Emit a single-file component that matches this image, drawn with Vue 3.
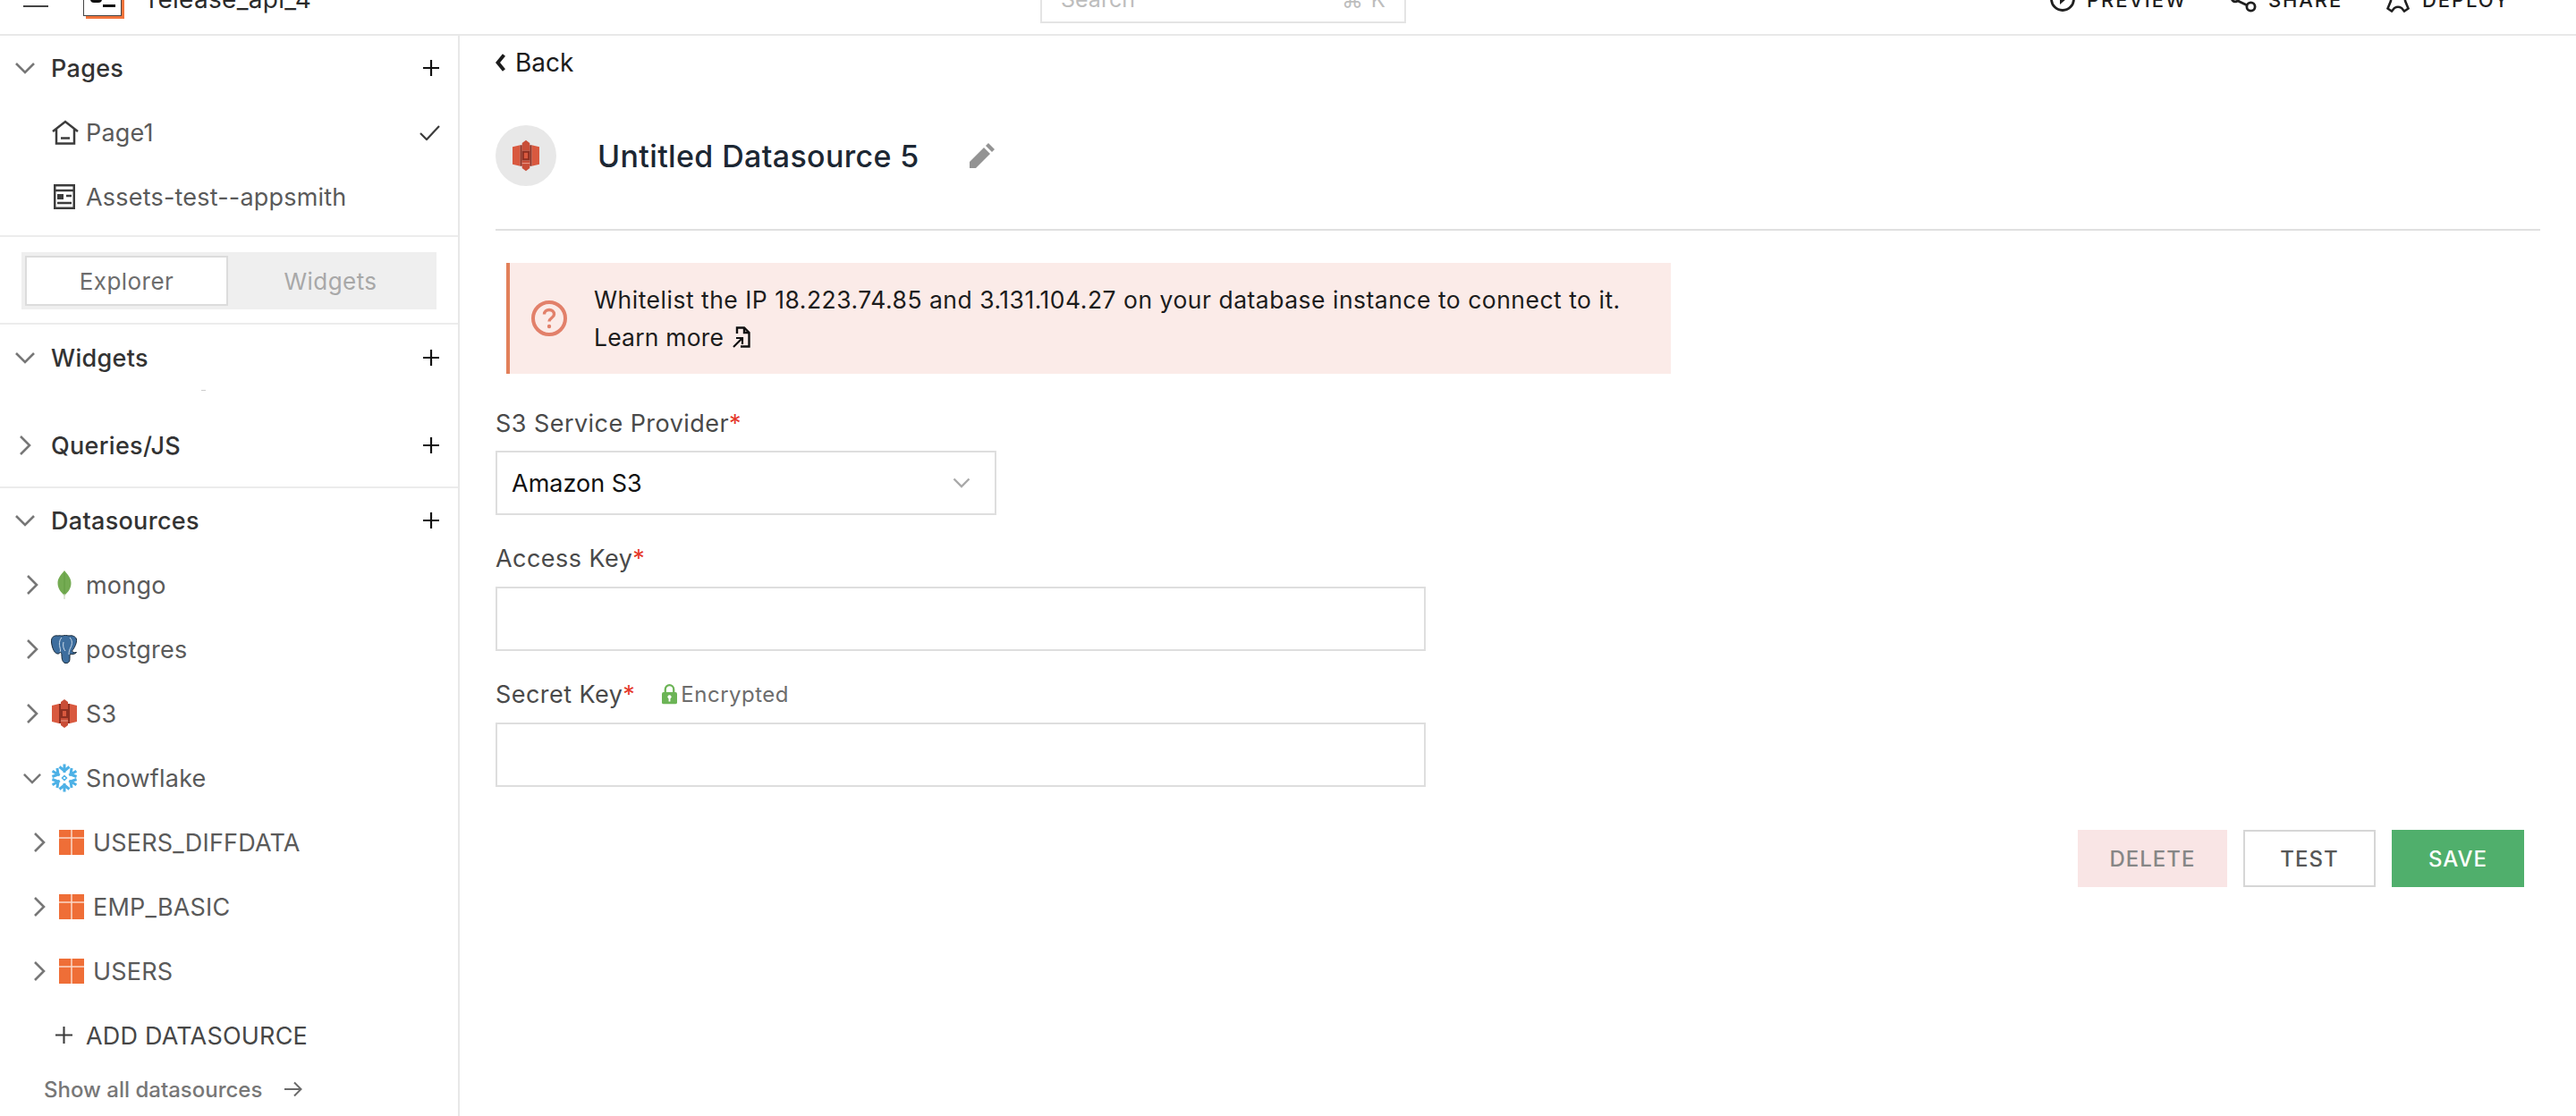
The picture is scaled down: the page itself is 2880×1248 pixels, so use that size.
<script setup>
const pages = [
  { name: 'Page1', icon: 'home', check: true },
  { name: 'Assets-test--appsmith', icon: 'doc', check: false }
]
const sources = [
  { name: 'mongo', icon: 'mongo' },
  { name: 'postgres', icon: 'pg' },
  { name: 'S3', icon: 's3' }
]
const tables = ['USERS_DIFFDATA', 'EMP_BASIC', 'USERS']
</script>

<template>
  <div class="app">
    <header class="top">
      <div class="top-left">
        <div class="burger"><i></i><i></i><i></i></div>
        <div class="logo"><span class="logo-box"><b></b><em></em></span></div>
        <span class="app-name">release_api_4</span>
        <svg class="caret" width="10" height="7" viewBox="0 0 12 8"><path d="M0 0h12L6 7z" fill="#222"/></svg>
      </div>
      <div class="search">
        <span class="s-ph">Search</span>
        <span class="s-key">⌘ K</span>
      </div>
      <div class="top-right">
        <div class="act prev">
          <svg width="28" height="28" viewBox="0 0 28 28" fill="none" stroke="#1f1f1f" stroke-width="2.800"><circle cx="14" cy="14" r="12.500"/><path d="M11 8l7 6-7 6z" fill="#1f1f1f" stroke="none"/></svg>
          <span>PREVIEW</span>
        </div>
        <div class="act share">
          <svg width="29" height="30" viewBox="0 0 29 30" fill="none" stroke="#1f1f1f" stroke-width="2.800"><circle cx="5" cy="14" r="3.800"/><circle cx="23" cy="5" r="3.800"/><circle cx="22.500" cy="23.500" r="4.600"/><path d="M8 17l10.500 5M8 12l11-6"/></svg>
          <span>SHARE</span>
        </div>
        <div class="act deploy">
          <svg width="26" height="30" viewBox="0 0 26 30" fill="none" stroke="#1f1f1f" stroke-width="2.600"><path d="M5 0v17L1.500 25.500l4.500 3 3-3.500c2.500-1.500 5.500-1.500 8 0l3 3.500 4.500-3L21 17V0"/></svg>
          <span>DEPLOY</span>
        </div>
        <svg class="caret2" width="12" height="8" viewBox="0 0 12 8"><path d="M0 0h12L6 7z" fill="#333"/></svg>
      </div>
    </header>

    <div class="body">
      <aside class="side">
        <section class="sec pages">
          <div class="row head">
            <svg class="chev-d" width="22" height="14" viewBox="0 0 22 14" fill="none" stroke="#777" stroke-width="2.600"><path d="M1 2l10 10L21 2"/></svg>
            <span class="h">Pages</span>
            <svg class="plus" width="18" height="18" viewBox="0 0 18 18" stroke="#111" stroke-width="2.200"><path d="M9 0v18M0 9h18"/></svg>
          </div>
          <div v-for="p in pages" :key="p.name" class="row item page">
            <svg v-if="p.icon === 'home'" class="pi" width="30" height="28" viewBox="0 0 30 28" fill="none" stroke="#3c3c3c" stroke-width="2.500"><path d="M1 13L15 2l14 11M5 10v16.500h20V10"/><path d="M10 20.500h10"/></svg>
            <svg v-else class="pi doc" width="24" height="28" viewBox="0 0 24 28" fill="none" stroke="#3c3c3c" stroke-width="2.500"><rect x="1.250" y="1.250" width="21.500" height="25.500"/><path d="M1 7h22M14 13h6M4 21h16"/><rect x="4" y="11" width="7" height="6" fill="#3c3c3c" stroke="none"/></svg>
            <span class="t">{{ p.name }}</span>
            <svg v-if="p.check" class="check" width="23" height="17" viewBox="0 0 23 17" fill="none" stroke="#3c3c3c" stroke-width="2.200"><path d="M1 9l7 7L22 1"/></svg>
          </div>
        </section>

        <section class="sec toggle-wrap">
          <div class="toggle">
            <div class="tab on">Explorer</div>
            <div class="tab">Widgets</div>
          </div>
        </section>

        <section class="sec-plain widgets">
          <div class="row head">
            <svg class="chev-d" width="22" height="14" viewBox="0 0 22 14" fill="none" stroke="#777" stroke-width="2.600"><path d="M1 2l10 10L21 2"/></svg>
            <span class="h">Widgets</span>
            <svg class="plus" width="18" height="18" viewBox="0 0 18 18" stroke="#111" stroke-width="2.200"><path d="M9 0v18M0 9h18"/></svg>
          </div>
          <div class="speck"></div>
        </section>

        <section class="sec queries">
          <div class="row head">
            <svg class="chev-r" width="14" height="22" viewBox="0 0 14 22" fill="none" stroke="#777" stroke-width="2.600"><path d="M2 1l10 10L2 21"/></svg>
            <span class="h">Queries/JS</span>
            <svg class="plus" width="18" height="18" viewBox="0 0 18 18" stroke="#111" stroke-width="2.200"><path d="M9 0v18M0 9h18"/></svg>
          </div>
        </section>

        <section class="sec-plain ds">
          <div class="row head">
            <svg class="chev-d" width="22" height="14" viewBox="0 0 22 14" fill="none" stroke="#777" stroke-width="2.600"><path d="M1 2l10 10L21 2"/></svg>
            <span class="h">Datasources</span>
            <svg class="plus" width="18" height="18" viewBox="0 0 18 18" stroke="#111" stroke-width="2.200"><path d="M9 0v18M0 9h18"/></svg>
          </div>

          <div v-for="s in sources" :key="s.name" class="row item source">
            <svg class="chev-r small" width="14" height="22" viewBox="0 0 14 22" fill="none" stroke="#777" stroke-width="2.600"><path d="M2 1l10 10L2 21"/></svg>
            <span class="ds-icon">
              <svg v-if="s.icon === 'mongo'" width="16" height="32" viewBox="0 0 16 32"><path d="M8 0c3 4 7.500 8 7.500 14 0 6-3.500 10-6.500 13H7C4 24 .5 20 .5 14 .5 8 5 4 8 0z" fill="#74AB52"/><path d="M8 3v25" stroke="#5e9a40" stroke-width=".8"/><path d="M8 26v6" stroke="#c9d6bd" stroke-width="1.200"/></svg>
              <svg v-else-if="s.icon === 'pg'" width="30" height="32" viewBox="0 0 30 32"><path d="M8 1C3 0 0 3 .5 8c.5 5 2.500 12 6.500 13 2 .5 3-1 3.500-2 1 1 1.500 2 1.500 4 0 4 1 8 4 8.500 3 .5 5-1 5-5 0-2 0-4 .5-5 2 .5 5.500 0 7-2-3 .5-4.500 0-5-1.500 3-4 5.500-9 5-13C28 2 24 0 20 1c-2-.5-5-1-7 0-2 0-3.500-.5-5 0z" fill="#3E6E9E" stroke="#1b2b3a" stroke-width="1"/><path d="M12 3c-3 3-3 8-2 11 .5 2 1 4 0 5M21 3c3 3 3 7 1 11-1 2-2 4-2 8M14 8c-1 4 0 8 2 10" fill="none" stroke="#dbe6f0" stroke-width=".9"/></svg>
              <svg v-else width="28" height="32" viewBox="0 0 28 32"><path d="M0 7l8-2v22l-8-2z" fill="#D9593F"/><path d="M28 7l-8-2v22l8-2z" fill="#D9593F"/><path d="M8 5h2v22H8zM18 5h2v22h-2z" fill="#8F3022"/><path d="M10 3l4-3 4 3v8H10z" fill="#C94E38"/><path d="M10 21h8v8l-4 3-4-3z" fill="#C94E38"/><path d="M10 11h8v10h-8z" fill="#8F3022"/><path d="M12 13h4v6h-4z" fill="#D9593F"/><path d="M10 24h8" stroke="#e99a88" stroke-width="1"/></svg>
            </span>
            <span class="t">{{ s.name }}</span>
          </div>

          <div class="row item source">
            <svg class="chev-d small" width="20" height="13" viewBox="0 0 22 14" fill="none" stroke="#777" stroke-width="2.800"><path d="M1 2l10 10L21 2"/></svg>
            <span class="ds-icon">
              <svg width="32" height="32" viewBox="-16 -16 32 32" fill="none" stroke="#4DB1E6" stroke-width="3.400">
                <g v-for="a in [0, 60, 120, 180, 240, 300]" :key="a" :transform="`rotate(${a})`"><path d="M0-6v-9.500M-5.500-12.500L0-8l5.500-4.500" stroke-width="3"/></g>
                <path d="M0-2.500L2.500 0 0 2.500-2.500 0z" stroke-width="1.500"/>
              </svg>
            </span>
            <span class="t">Snowflake</span>
          </div>

          <div v-for="t in tables" :key="t" class="row item table">
            <svg class="chev-r small" width="14" height="22" viewBox="0 0 14 22" fill="none" stroke="#777" stroke-width="2.600"><path d="M2 1l10 10L2 21"/></svg>
            <svg class="tbl" width="28" height="28" viewBox="0 0 28 28"><rect width="28" height="28" fill="#EF6E37"/><path d="M0 9h28M14 0v28" stroke="#fbd9c9" stroke-width="1.500"/></svg>
            <span class="t">{{ t }}</span>
          </div>

          <div class="row item add">
            <svg class="add-plus" width="19" height="19" viewBox="0 0 18 18" stroke="#3c3c3c" stroke-width="2"><path d="M9 0v18M0 9h18"/></svg>
            <span class="t add-t">ADD DATASOURCE</span>
          </div>

          <div class="show">
            <span>Show all datasources</span>
            <svg width="20" height="18" viewBox="0 0 20 18" fill="none" stroke="#6a6a6a" stroke-width="2"><path d="M0 9h18M11 1.500L18.500 9 11 16.500"/></svg>
          </div>
        </section>
      </aside>

      <main class="main">
        <div class="back">
          <svg width="11" height="20" viewBox="0 0 11 20" fill="none" stroke="#1c1c1c" stroke-width="4"><path d="M9.500 1.500L2.500 10l7 8.500"/></svg>
          <span>Back</span>
        </div>

        <div class="title-row">
          <div class="circle">
            <svg width="30" height="36" viewBox="0 0 28 32"><path d="M0 7l8-2v22l-8-2z" fill="#D9593F"/><path d="M28 7l-8-2v22l8-2z" fill="#D9593F"/><path d="M8 5h2v22H8zM18 5h2v22h-2z" fill="#8F3022"/><path d="M10 3l4-3 4 3v8H10z" fill="#C94E38"/><path d="M10 21h8v8l-4 3-4-3z" fill="#C94E38"/><path d="M10 11h8v10h-8z" fill="#8F3022"/><path d="M12 13h4v6h-4z" fill="#D9593F"/><path d="M10 24h8" stroke="#e99a88" stroke-width="1"/></svg>
          </div>
          <h1>Untitled Datasource 5</h1>
          <svg class="pencil" width="28" height="28" viewBox="0 0 28 28" fill="#939393"><path d="M0 28v-7L16 5l7 7L7 28z"/><path d="M18 3l3-3 7 7-3 3z"/></svg>
        </div>

        <div class="rule"></div>

        <div class="banner">
          <svg class="q" width="40" height="40" viewBox="0 0 40 40" fill="none"><circle cx="20" cy="20" r="18" stroke="#E2806A" stroke-width="4"/><path d="M14.500 15.500c0-3 2.500-5 5.500-5s5.500 2 5.500 5c0 4-5.500 4-5.500 8" stroke="#E2806A" stroke-width="3.400"/><circle cx="20" cy="29" r="2.200" fill="#E2806A"/></svg>
          <div class="b-text">
            <div class="wl">Whitelist the IP 18.223.74.85 and 3.131.104.27 on your database instance to connect to it.</div>
            <div class="learn">Learn more
              <svg width="20" height="24" viewBox="0 0 20 24" fill="none" stroke="#111" stroke-width="2.400"><path d="M5 8V1.500h8L18.500 7v15.500H9"/><path d="M13 1.500V7h5.500"/><path d="M1 23L10 14M4 13h7v7" stroke-width="2.200"/></svg>
            </div>
          </div>
        </div>

        <label class="lab first">S3 Service Provider<i>*</i></label>
        <div class="field select">
          <span>Amazon S3</span>
          <svg width="20" height="12" viewBox="0 0 20 12" fill="none" stroke="#a9a9a9" stroke-width="2.400"><path d="M1.500 1.500L10 10l8.500-8.500"/></svg>
        </div>

        <label class="lab">Access Key<i>*</i></label>
        <div class="field wide"></div>

        <label class="lab">Secret Key<i>*</i>
          <span class="enc">
            <svg width="17" height="24" viewBox="0 0 18 24"><path d="M4 11V6.500a5 5 0 0 1 10 0V11" fill="none" stroke="#6CB456" stroke-width="2.400"/><rect y="10" width="18" height="14" rx="2" fill="#6CB456"/><circle cx="9" cy="15.500" r="2.200" fill="#fff"/><rect x="8" y="16" width="2" height="5" fill="#fff"/></svg>
            <span>Encrypted</span>
          </span>
        </label>
        <div class="field wide"></div>

        <div class="actions">
          <button class="btn del">DELETE</button>
          <button class="btn test">TEST</button>
          <button class="btn save">SAVE</button>
        </div>
      </main>
    </div>
  </div>
</template>

<style>
html, body { margin: 0; background: #fff; overflow: hidden; }
</style>

<style scoped>
.app { width: 2880px; height: 1248px; overflow: hidden; font-family: Inter, "Liberation Sans", sans-serif; color: #2b2b2b; display: flex; flex-direction: column; }
.top { height: 78px; margin-top: -40px; flex: none; border-bottom: 2px solid #e8e8e8; display: grid; grid-template-columns: 1163px 409px 1fr; align-items: center; }
.top-left { display: flex; align-items: center; padding-left: 26px; }
.burger { width: 28px; display: flex; flex-direction: column; gap: 6px; }
.burger i { display: block; height: 2px; background: #444; }
.logo { margin-left: 39px; }
.logo-box { display: block; box-sizing: border-box; width: 43px; height: 38px; background: #fff; border: 1px solid #444; box-shadow: 3px 3px 0 #F2743C; position: relative; }
.logo-box b { position: absolute; left: 7px; top: 14px; width: 13px; height: 8px; background: #111; border-radius: 4px; }
.logo-box em { position: absolute; left: 21px; top: 24px; width: 14px; height: 2.500px; background: #111; }
.app-name { margin-left: 30px; font-size: 28px; line-height: 34px; color: #2a2a2a; letter-spacing: .3px; }
.caret { margin-left: 24px; margin-top: -4px; }
.search { box-sizing: border-box; height: 54px; border: 2px solid #e4e4e4; display: flex; align-items: center; justify-content: space-between; padding: 0 20px 0 21px; color: #bdbdbd; font-size: 25px; }
.s-key { font-size: 24px; letter-spacing: 1px; }
.top-right { display: flex; align-items: center; height: 40px; padding-left: 720px; font-size: 22px; letter-spacing: 1.900px; color: #1f1f1f; font-weight: 500; }
.act { display: flex; align-items: center; gap: 13px; }
.act span { padding-top: 2px; }
.share { margin-left: 49px; }
.deploy { margin-left: 49px; gap: 14px; }
.caret2 { margin-left: 27px; margin-top: -4px; }

.body { flex: 1; display: flex; min-height: 0; }
.side { width: 514px; box-sizing: border-box; flex: none; border-right: 2px solid #e8e8e8; display: flex; flex-direction: column; }
.sec { border-bottom: 2px solid #ececec; }
.row { height: 72px; display: flex; align-items: center; position: relative; box-sizing: border-box; flex: none; }
.pages { height: 225px; box-sizing: border-box; }
.head { padding-left: 57px; }
.h { font-size: 27px; font-weight: 500; color: #333; letter-spacing: .3px; }
.chev-d { position: absolute; left: 17px; top: 29px; }
.chev-r { position: absolute; left: 21px; top: 25px; }
.plus { position: absolute; left: 473px; top: 27px; }
.item { font-size: 27px; color: #5a5a5a; letter-spacing: .2px; }
.t { display: block; }
.page { padding-left: 96px; }
.pi { position: absolute; left: 58px; top: 22px; }
.pi.doc { left: 60px; top: 22px; }
.check { position: absolute; left: 469px; top: 28px; }
.toggle-wrap { height: 98px; box-sizing: border-box; padding: 17px 24px 0; }
.toggle { width: 464px; height: 64px; background: #efefef; display: flex; box-sizing: border-box; padding: 4px; }
.tab { flex: 1; display: flex; align-items: center; justify-content: center; font-size: 26px; color: #a8a8a8; letter-spacing: .45px; box-sizing: border-box; }
.tab.on { flex: none; width: 227px; background: #fff; border: 2px solid #dcdcdc; color: #6d6d6d; }
.widgets { height: 98px; box-sizing: border-box; padding-top: 1px; position: relative; flex: none; }
.speck { position: absolute; left: 225px; top: 73px; width: 5px; height: 1px; background: #ccc; }
.queries { height: 85px; flex: none; box-sizing: border-box; padding-top: 1px; }
.source { padding-left: 96px; }
.source .chev-r.small { left: 29px; }
.source .chev-d.small { left: 26px; top: 30px; }
.ds-icon { position: absolute; left: 56px; top: 20px; width: 32px; height: 32px; display: flex; justify-content: center; }
.table { padding-left: 104px; }
.table .chev-r.small { left: 37px; }
.tbl { position: absolute; left: 66px; top: 22px; }
.add { padding-left: 96px; color: #474747; }
.add-plus { position: absolute; left: 62px; top: 26px; }
.show { display: flex; align-items: center; padding-left: 49px; margin-top: 8px; height: 32px; font-size: 24px; color: #777; gap: 25px; font-weight: 500; }

.main { flex: 1; min-width: 0; padding: 0 40px 0 40px; box-sizing: border-box; }
.back { display: flex; align-items: center; gap: 11px; height: 36px; margin-top: 12px; font-size: 28px; color: #1c1c1c; }
.title-row { display: flex; align-items: center; margin-top: 52px; height: 68px; }
.circle { width: 68px; height: 68px; border-radius: 50%; background: #e8e8e8; display: flex; align-items: center; justify-content: center; }
h1 { margin: 0 0 0 46px; font-size: 34px; font-weight: 500; color: #1c2733; letter-spacing: .35px; }
.pencil { margin-left: 56px; }
.rule { height: 2px; width: 2286px; background: #e0e0e0; margin-top: 48px; }
.banner { box-sizing: border-box; width: 1302px; height: 124px; margin: 36px 0 0 12px; background: #FBEBE8; border-left: 4px solid #E2805A; display: flex; align-items: center; padding-left: 24px; font-size: 26.500px; line-height: 42px; color: #1c1c1c; }
.q { flex: none; }
.b-text { margin-left: 30px; }
.wl { letter-spacing: .5px; }
.learn { display: flex; align-items: center; gap: 10px; letter-spacing: .2px; }
.lab { display: flex; align-items: center; height: 34px; margin-top: 31px; font-size: 27px; color: #4a4a4a; letter-spacing: .45px; }
.lab i { color: #E5392A; font-style: normal; }
.lab.first { margin-top: 38px; }
.field { box-sizing: border-box; margin-top: 15px; border: 2px solid #dedede; background: #fff; height: 72px; }
.select { margin-top: 14px; width: 560px; display: flex; align-items: center; justify-content: space-between; padding: 0 27px 0 16px; font-size: 27px; color: #111; }
.wide { width: 1040px; }
.enc { display: inline-flex; align-items: center; gap: 4px; margin-left: 30px; font-size: 24px; color: #6d6d6d; letter-spacing: .5px; }
.actions { display: flex; gap: 18px; justify-content: flex-end; width: 2268px; margin-top: 48px; }
.btn { box-sizing: border-box; height: 64px; font-family: inherit; font-size: 24px; letter-spacing: 1px; font-weight: 500; border: 0; padding: 0; }
.del { width: 167px; background: #F9E5E5; color: #868686; }
.test { width: 148px; background: #fff; border: 2px solid #d6d6d6; color: #575757; }
.save { width: 148px; background: #50AF6C; color: #fff; }
</style>
